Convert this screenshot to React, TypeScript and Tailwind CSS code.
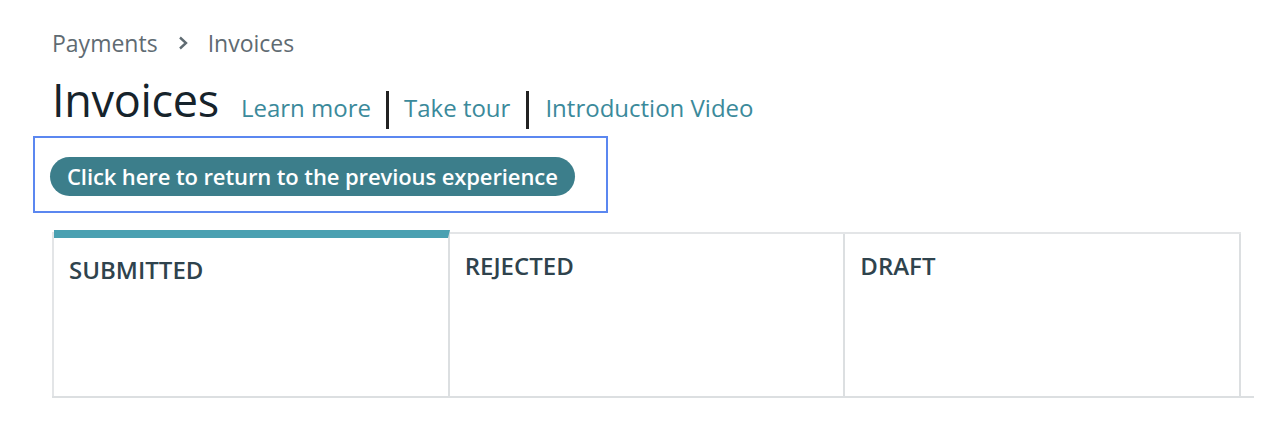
import React from "react";

const font = { fontFamily: '"Open Sans", "Liberation Sans", sans-serif' };

const tabs = [
  { label: "SUBMITTED", active: true },
  { label: "REJECTED", active: false },
  { label: "DRAFT", active: false },
];

export default function App() {
  return (
    <div className="min-h-[436px] w-[1270px] bg-white pl-[52px] pt-[28px]" style={font}>
      {/* breadcrumb */}
      <div className="flex items-center text-[23px] leading-[30px] text-[#5f6b72]">
        <span>Payments</span>
        <svg width="14" height="16" viewBox="0 0 14 16" className="ml-[18px] mr-[18px]">
          <path d="M4 2.5l6 5.5-6 5.5" fill="none" stroke="#5f6b72" strokeWidth="2.4" />
        </svg>
        <span>Invoices</span>
      </div>

      {/* title row */}
      <div className="mt-[18px] flex items-baseline">
        <h1 className="text-[45px] leading-[48px] text-[#16232b] tracking-[-0.3px]">Invoices</h1>
        <div className="ml-[22px] flex items-baseline text-[24px] leading-[30px] text-[#3b8a9b]">
          <a>Learn more</a>
          <span className="mx-[15px] inline-block h-[38px] w-[3px] translate-y-[12px] bg-[#222]" />
          <a>Take tour</a>
          <span className="mx-[16px] inline-block h-[38px] w-[3px] translate-y-[12px] bg-[#222]" />
          <a>Introduction Video</a>
        </div>
      </div>

      {/* focused return button */}
      <div className="-ml-[19px] mt-[12px] w-[575px] border-2 border-[#5b87f0] px-[15px] pb-[15px] pt-[19px]">
        <button className="h-[39px] rounded-full bg-[#3c7e8b] px-[17px] text-[22px] font-semibold leading-[39px] tracking-[-0.1px] text-white">
          Click here to return to the previous experience
        </button>
      </div>

      {/* status tabs */}
      <div className="mt-[19px] w-[1202px] border-b-2 border-[#dcdfe1]">
        <div className="grid w-[1189px] grid-cols-3 border-l-2 border-t-2 border-[#e3e5e7]">
          {tabs.map((t) => (
            <div
              key={t.label}
              className={
                "border-r-2 border-[#dcdfe1] px-[15px] pt-[16px] " +
                (t.active ? "-mt-[4px] h-[166px] border-t-[8px] border-t-[#4aa0b1]" : "h-[162px]")
              }
            >
              <span className="text-[24px] font-semibold leading-[32px] text-[#2f434d]">{t.label}</span>
            </div>
          ))}
        </div>
      </div>
    </div>
  );
}
